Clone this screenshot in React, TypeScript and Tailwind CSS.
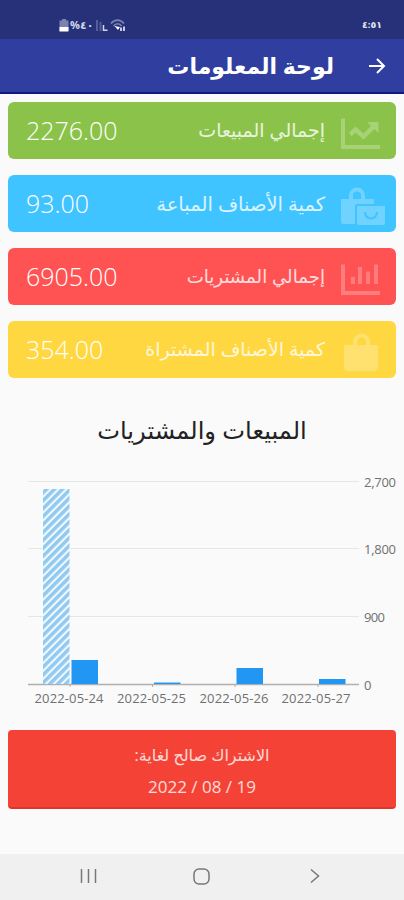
import type { ReactNode } from "react";

interface StatCard {
  label: string;
  value: string;
  color: string;
  labelClass: string;
  icon: ReactNode;
}

interface Bar {
  x: number;
  top: number;
  striped?: boolean;
}

const TrendIcon = () => (
  <svg width="46" height="46" viewBox="0 0 46 46" fill="currentColor">
    <path d="M1 10.500h4V37h35v4H1z" />
    <path d="M9 24.500l6.500-6 8 7 7.500-7.500-4-4h11.500v11l-4-4-11 10.500-8-7-4 4z" />
  </svg>
);

const BagsIcon = () => (
  <svg width="46" height="46" viewBox="0 0 46 46" fill="none">
    <path
      d="M1 18h8v-3.500a8 8 0 0 1 16 0V18h9v5H17a2 2 0 0 0-2 2v18H3a2 2 0 0 1-2-2zM13 18h8v-3.500a4 4 0 0 0-8 0z"
      fill="currentColor"
      fillRule="evenodd"
    />
    <path
      d="M17 25h28v17a2 2 0 0 1-2 2H19a2 2 0 0 1-2-2zM24 31c0 10 14 10 14 0h-2c0 7-10 7-10 0z"
      fill="currentColor"
      fillRule="evenodd"
    />
  </svg>
);

const BarsIcon = () => (
  <svg width="46" height="46" viewBox="0 0 46 46" fill="currentColor">
    <path d="M1 10.500h4V37h35v4H1z" />
    <path d="M11 23h4v7h-4zM18 13h4v17h-4zM26 17.500h4V30h-4zM34 10.500h4V30h-4z" />
  </svg>
);

const BagIcon = () => (
  <svg width="46" height="46" viewBox="0 0 46 46" fill="none">
    <path
      d="M4 18h9v-3a8.500 8.500 0 0 1 17 0v3h8v22a4 4 0 0 1-4 4H8a4 4 0 0 1-4-4zM17 18h9v-3a4.500 4.500 0 0 0-9 0z"
      fill="currentColor"
      fillRule="evenodd"
    />
  </svg>
);

const stats: StatCard[] = [
  { label: "إجمالي المبيعات", value: "2276.00", color: "bg-[#8bc34a]", labelClass: "text-[19px]", icon: <TrendIcon /> },
  { label: "كمية الأصناف المباعة", value: "93.00", color: "bg-[#40c4ff]", labelClass: "text-[19.500px]", icon: <BagsIcon /> },
  { label: "إجمالي المشتريات", value: "6905.00", color: "bg-[#ff5252]", labelClass: "text-[18.200px]", icon: <BarsIcon /> },
  { label: "كمية الأصناف المشتراة", value: "354.00", color: "bg-[#ffd740]", labelClass: "text-[19px]", icon: <BagIcon /> },
];

const bars: Bar[] = [
  { x: 43, top: 19, striped: true },
  { x: 71.5, top: 190 },
  { x: 154, top: 212.5 },
  { x: 236.5, top: 198 },
  { x: 319, top: 209 },
];

const gridLines = [
  { y: 11.5, label: "2,700", width: 32 },
  { y: 78.5, label: "1,800", width: 32 },
  { y: 146.5, label: "900", width: 21 },
  { y: 214.5, label: "0", width: 7 },
];

const days = [
  { label: "2022-05-24", x: 69 },
  { label: "2022-05-25", x: 151.5 },
  { label: "2022-05-26", x: 234 },
  { label: "2022-05-27", x: 316 },
];

function StatusBar() {
  return (
    <div className="flex h-[39px] items-center justify-between bg-[#26317a] pt-3 pr-[22px] pl-[59px] text-white">
      <div className="flex items-center">
        <svg width="10" height="13" viewBox="0 0 10 13">
          <path d="M3 0h4v1.500h2.500V12H.5V1.500H3z" fill="#7c83b0" />
          <path d="M.5 8h9v4.500h-9z" fill="#fff" />
        </svg>
        <span dir="ltr" className="ml-px w-[22px] text-[11px] font-bold text-[#d4d7e8]">%٤٠</span>
        <svg className="ml-1" width="14" height="13" viewBox="0 0 14 13" fill="none">
          <path d="M0 1h2v11H0zM3.500 3h2v9h-2z" fill="#565f99" />
          <path d="M7.500 6v5.200h4" stroke="#d4d7e8" strokeWidth="1.500" />
        </svg>
        <svg width="17" height="13" viewBox="0 0 17 13" fill="none">
          <path d="M1 4.500c4-4.500 9-4.500 13 0M3.500 7c2.500-3 6-3 8 0" stroke="#7c83b0" strokeWidth="1.700" />
          <path d="M4.500 7l3.500 4 2-3z" fill="#fff" />
          <path d="M11 12V8.500M14 7.500V12" stroke="#fff" strokeWidth="1.500" />
        </svg>
      </div>
      <span className="text-[9.500px] font-bold text-[#e3e5f0]">٤:٥١</span>
    </div>
  );
}

function Chart() {
  return (
    <svg className="block" width="404" height="240" viewBox="0 0 404 240" direction="ltr">
      <defs>
        <pattern id="stripes" width="5.600" height="5.600" patternUnits="userSpaceOnUse" patternTransform="rotate(45)">
          <rect width="5.600" height="5.600" fill="#f3f9fe" />
          <rect width="3.500" height="5.600" fill="#90caf0" />
        </pattern>
      </defs>
      {gridLines.map((line) => (
        <g key={line.label}>
          <path d={`M28 ${line.y}H359`} stroke={line.label === "0" ? "#b0b0b0" : "#e6e6e6"} strokeWidth={line.label === "0" ? 1.5 : 1} />
          <text x="364" y={line.y + 5} fontSize="13" fill="#707070" textLength={line.width}>{line.label}</text>
        </g>
      ))}
      {[70, 152.5, 235, 318].map((x) => (
        <path key={x} d={`M${x} 214v3`} stroke="#b0b0b0" />
      ))}
      {bars.map((bar) => (
        <rect key={bar.x} x={bar.x} y={bar.top} width="26.500" height={214 - bar.top} fill={bar.striped ? "url(#stripes)" : "#2196f3"} />
      ))}
      {days.map((day) => (
        <text key={day.label} x={day.x} y="233" fontSize="13" textAnchor="middle" fill="#707070" textLength="69">{day.label}</text>
      ))}
    </svg>
  );
}

export default function App() {
  return (
    <div dir="rtl" className="flex h-[900px] w-[404px] flex-col overflow-hidden bg-[#fafafa] font-['Open_Sans','DejaVu_Sans',sans-serif]">
      <div dir="ltr">
        <StatusBar />
      </div>

      <header className="flex h-[55px] items-center border-b-2 border-[#0d1a85] bg-[#303f9f] pr-[18px] text-white">
        <svg width="18" height="18" viewBox="0 0 18 18" fill="none" stroke="currentColor" strokeWidth="2">
          <path d="M1 9h15M9 2L16 9 9 16" />
        </svg>
        <h1 className="mr-[34px] text-[22px] font-bold whitespace-nowrap">لوحة المعلومات</h1>
      </header>

      <main className="flex flex-1 flex-col">
        <div className="flex flex-col gap-4 px-2 pt-2">
          {stats.map((stat) => (
            <div key={stat.label} className={`flex h-[57px] items-center rounded-md pr-[10px] pl-[18px] ${stat.color}`}>
              <div className="text-white/25">{stat.icon}</div>
              <span className={`mr-[15px] whitespace-nowrap text-white/80 ${stat.labelClass}`}>{stat.label}</span>
              <span className="mr-auto text-[25px] font-light text-white">{stat.value}</span>
            </div>
          ))}
        </div>

        <h2 className="mt-8 flex h-[40px] items-center justify-center text-[24.200px] whitespace-nowrap text-[#222]">المبيعات والمشتريات</h2>
        <div className="mt-5">
          <Chart />
        </div>

        <div className="mx-2 mt-[20px] flex h-[79px] flex-col items-center justify-center gap-1 rounded-[4px] border-b-2 border-[#e0352c] bg-[#f44336] pt-1 text-[17px] text-white/80">
          <p className="text-[16px] leading-7">الاشتراك صالح لغاية:</p>
          <p dir="ltr" className="leading-7">2022 / 08 / 19</p>
        </div>
      </main>

      <nav dir="ltr" className="flex h-[46px] items-center bg-[#f0f0f0] pb-0.5 text-[#777]">
        <svg className="ml-[80px]" width="17" height="16" viewBox="0 0 17 16" stroke="currentColor" strokeWidth="1.500">
          <path d="M1.500 1v14M8.500 1v14M15.500 1v14" />
        </svg>
        <svg className="ml-[96px]" width="17" height="17" viewBox="0 0 17 17" fill="none" stroke="currentColor" strokeWidth="1.500">
          <rect x="1" y="1" width="15" height="15" rx="5" />
        </svg>
        <svg className="ml-[99px]" width="12" height="16" viewBox="0 0 12 16" fill="none" stroke="currentColor" strokeWidth="1.500">
          <path d="M2 1.500L9.500 8 2 14.500" />
        </svg>
      </nav>
    </div>
  );
}
